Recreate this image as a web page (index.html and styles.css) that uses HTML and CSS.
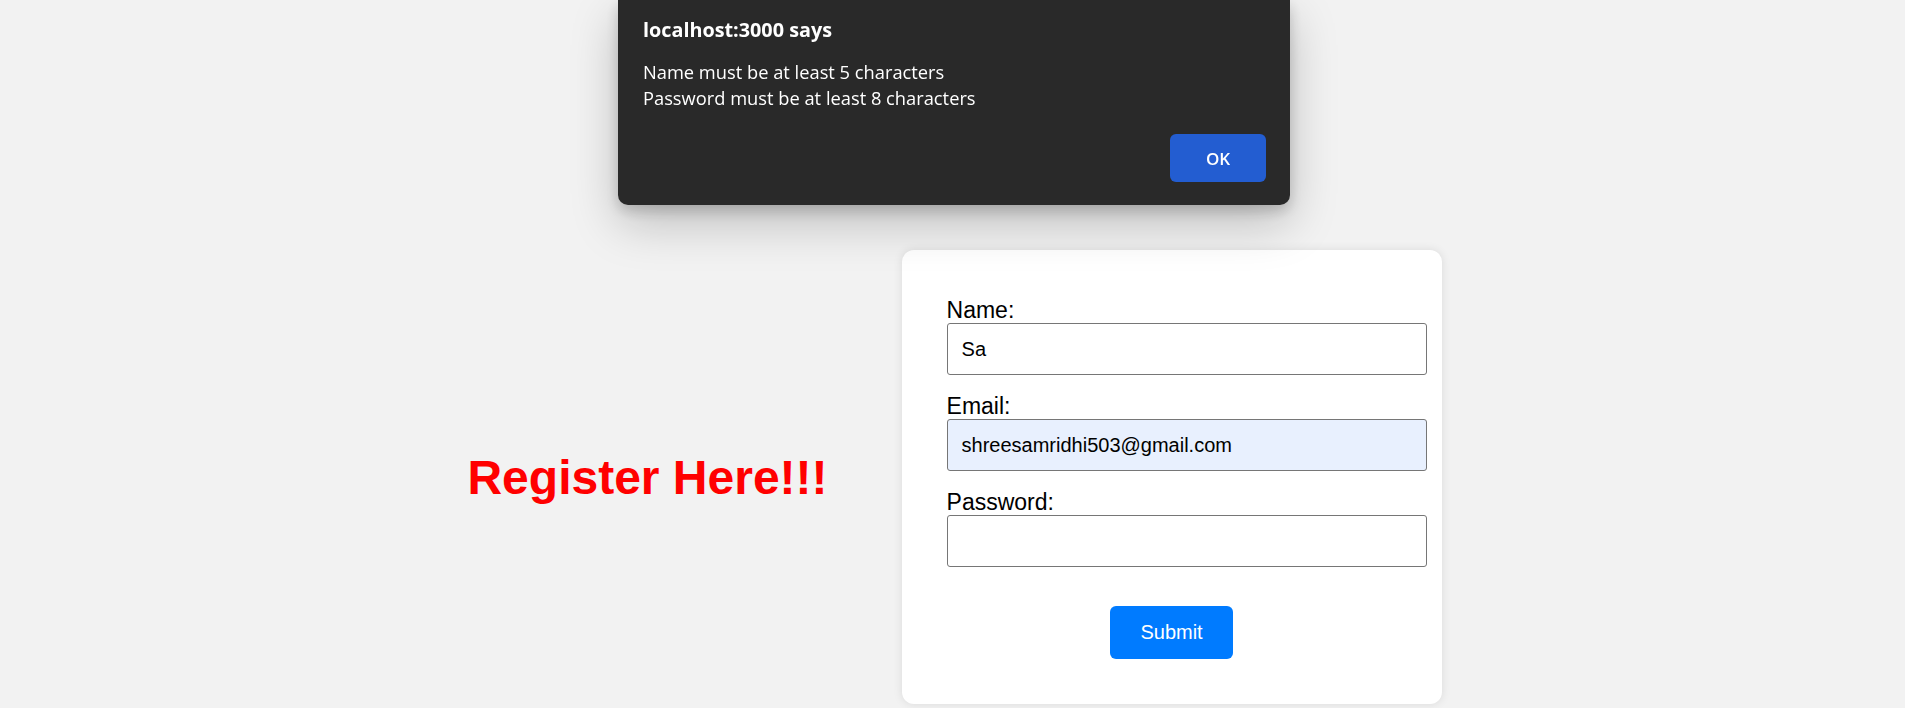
FILE: index.html
```html
<!DOCTYPE html>
<html lang="en">
<head>
<meta charset="utf-8">
<title>Register</title>
<link rel="stylesheet" href="styles.css">
</head>
<body>
<main class="page">
  <h1 class="heading">Register Here!!!</h1>
  <form class="card">
    <label class="field-label" for="name">Name:</label>
    <input class="field-input" id="name" type="text" value="Sa">
    <label class="field-label" for="email">Email:</label>
    <input class="field-input field-autofill" id="email" type="email" value="shreesamridhi503@gmail.com">
    <label class="field-label" for="password">Password:</label>
    <input class="field-input" id="password" type="password">
    <button class="submit" type="button">Submit</button>
  </form>
</main>
<div class="alert" role="alertdialog">
  <div class="alert-title">localhost:3000 says</div>
  <div class="alert-message">Name must be at least 5 characters<br>Password must be at least 8 characters</div>
  <div class="alert-actions">
    <button class="alert-ok" type="button">OK</button>
  </div>
</div>
</body>
</html>
```
FILE: styles.css
```css
html, body {
  margin: 0;
  padding: 0;
  background: #f2f2f2;
  height: 100%;
  overflow: hidden;
}
body {
  font-family: "Liberation Sans", Arial, sans-serif;
  color: #000;
}
.page {
  display: flex;
  justify-content: center;
  align-items: center;
  gap: 74px;
  padding-top: 250px;
  padding-left: 4px;
}
.heading {
  margin: 0;
  font-size: 48px;
  font-weight: bold;
  color: #ff0000;
  line-height: 55px;
}
.card {
  width: 450px;
  background: #fff;
  border-radius: 12px;
  padding: 47px 45px 45px;
  box-shadow: 0 0 10px rgba(0, 0, 0, 0.1);
  display: flex;
  flex-direction: column;
  align-items: flex-start;
}
.field-label {
  display: block;
  font-size: 23px;
  line-height: 26px;
}
.field-input {
  display: block;
  width: 100%;
  height: 22px;
  padding: 14px;
  margin: 0 0 18px;
  border: 1px solid #767676;
  border-radius: 3px;
  font-family: "Liberation Sans", Arial, sans-serif;
  font-size: 20px;
  line-height: 22px;
  color: #000;
  background: #fff;
  outline: none;
}
.field-input:last-of-type {
  margin-bottom: 0;
}
.field-autofill {
  background: #e8f0fe;
}
.submit {
  align-self: center;
  margin-top: 39px;
  padding: 15px 30px;
  border: none;
  border-radius: 6px;
  background: #007bff;
  color: #fff;
  font-family: "Liberation Sans", Arial, sans-serif;
  font-size: 20px;
  line-height: 23px;
}
.alert {
  position: fixed;
  top: 0;
  left: 618px;
  width: 623px;
  height: 164px;
  padding: 18px 24px 23px 25px;
  background: #292929;
  border-radius: 0 0 10px 10px;
  box-shadow: 0 6px 14px rgba(0, 0, 0, 0.18), 0 18px 48px rgba(0, 0, 0, 0.22);
  font-family: "Open Sans", "Noto Sans", sans-serif;
  color: #fff;
}
.alert-title {
  font-size: 19.8px;
  font-weight: 700;
  line-height: 24px;
}
.alert-message {
  margin-top: 17px;
  font-size: 18.3px;
  line-height: 26px;
}
.alert-actions {
  display: flex;
  justify-content: flex-end;
  margin-top: 23px;
}
.alert-ok {
  width: 96px;
  height: 48px;
  border: none;
  border-radius: 6px;
  background: #235dd1;
  color: #fff;
  font-family: "Open Sans", "Noto Sans", sans-serif;
  font-size: 17px;
  font-weight: 600;
}
```
